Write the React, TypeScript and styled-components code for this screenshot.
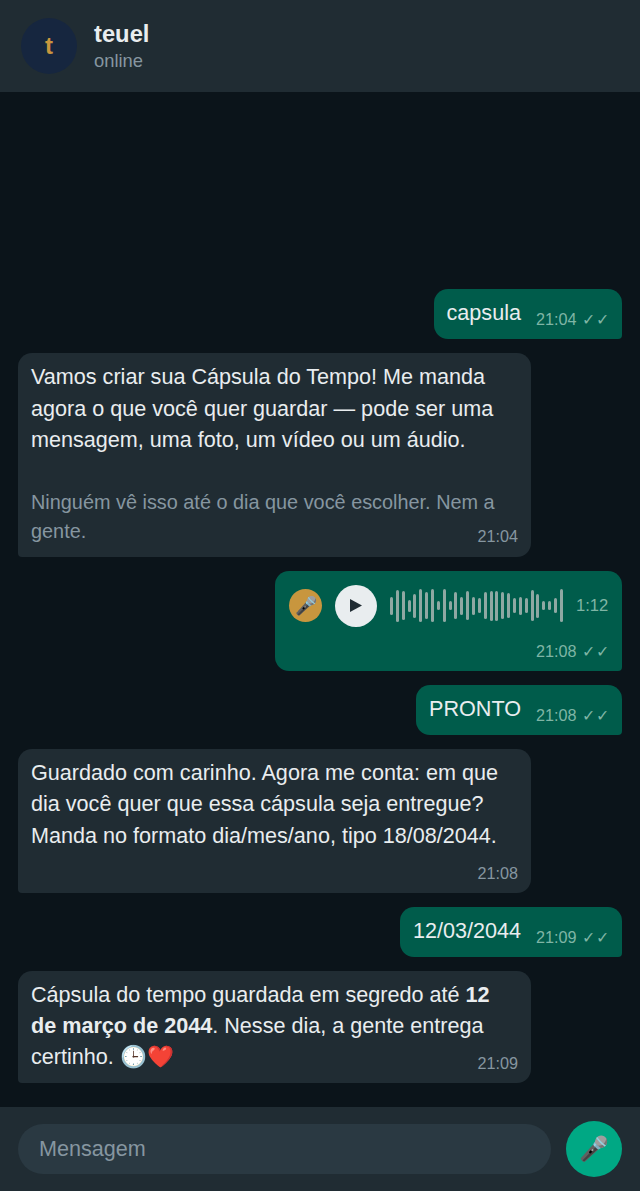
import React from 'react';
import styled, { createGlobalStyle } from 'styled-components';

const GlobalStyle = createGlobalStyle`
  * { box-sizing: border-box; }
  html, body { margin: 0; padding: 0; background: #0b141a; }
  body { font-family: "Liberation Sans", Arial, sans-serif; }
`;

const Page = styled.div`
  display: flex;
  flex-direction: column;
  width: 640px;
  height: 1191px;
  background: #0b141a;
  overflow: hidden;
`;

const Header = styled.header`
  display: flex;
  align-items: center;
  gap: 17px;
  height: 92px;
  padding: 0 21px;
  background: #202c33;
`;

const Avatar = styled.div`
  display: flex;
  align-items: center;
  justify-content: center;
  width: 56px;
  height: 56px;
  border-radius: 50%;
  background: #16263f;
  color: #c8963e;
  font-size: 24px;
  font-weight: 700;
`;

const Contact = styled.div`
  display: flex;
  flex-direction: column;
`;

const Name = styled.div`
  color: #e9edef;
  font-size: 23.76px;
  font-weight: 700;
  line-height: 30px;
`;

const Status = styled.div`
  color: #8696a0;
  font-size: 18.36px;
  line-height: 24px;
`;

const Messages = styled.main`
  flex: 1;
  display: flex;
  flex-direction: column;
  justify-content: flex-end;
  gap: 14px;
  padding: 0 18px 24px;
`;

const Bubble = styled.div<{ $sent?: boolean }>`
  display: flow-root;
  align-self: ${p => (p.$sent ? 'flex-end' : 'flex-start')};
  min-height: 50px;
  max-width: 513px;
  padding: 8px 13px 0;
  border-radius: ${p => (p.$sent ? '14px 14px 4px 14px' : '14px 14px 14px 4px')};
  background: ${p => (p.$sent ? '#005c4b' : '#202c33')};
  color: #e9edef;
  font-size: 21.6px;
  line-height: 1.45;
`;

const Muted = styled.div`
  margin-top: 33px;
  color: #8696a0;
  font-size: 19.87px;
`;

const Time = styled.span<{ $sent?: boolean }>`
  float: right;
  margin: 10px 0 7.7px 15px;
  color: ${p => (p.$sent ? '#7fb5a5' : '#8696a0')};
  font-size: 16.2px;
  line-height: 24px;
  white-space: nowrap;
`;

const MutedTime = styled(Time)`
  margin-top: 7px;
  margin-bottom: 8.7px;
`;

const Ticks = styled.span`
  margin: 0 -1px 0 1px;
  letter-spacing: 1px;
`;

const AudioBubble = styled(Bubble)`
  display: flex;
  flex-direction: column;
  align-items: flex-end;
  width: 347px;
  padding-top: 14px;
  padding-left: 14px;
`;

const AudioRow = styled.div`
  display: flex;
  align-items: center;
  gap: 13px;
  width: 100%;
  margin-bottom: 2.8px;
`;

const AudioMic = styled.div`
  display: flex;
  align-items: center;
  justify-content: center;
  width: 33px;
  height: 33px;
  border-radius: 50%;
  background: #c8963e;
  font-size: 18px;
  line-height: 1;
`;

const PlayButton = styled.div`
  display: flex;
  align-items: center;
  justify-content: center;
  width: 42px;
  height: 42px;
  border-radius: 50%;
  background: #e9edef;
`;

const Wave = styled.div`
  display: flex;
  align-items: center;
  justify-content: space-between;
  width: 173px;
  height: 34px;
`;

const WaveBar = styled.div`
  width: 3px;
  border-radius: 1.5px;
  background: #8fa8a3;
`;

const Duration = styled.span`
  color: #7fb5a5;
  font-size: 16.6px;
  line-height: 24px;
`;

const Composer = styled.footer`
  display: flex;
  align-items: center;
  gap: 15px;
  height: 84px;
  padding: 0 18px;
  background: #202c33;
`;

const InputBox = styled.input`
  flex: 1;
  min-width: 0;
  height: 50px;
  padding: 0 21px;
  border: 0;
  border-radius: 25px;
  outline: 0;
  background: #2a3942;
  color: #e9edef;
  font-family: inherit;
  font-size: 21.6px;
  &::placeholder { color: #8696a0; opacity: 1; }
`;

const MicButton = styled.div`
  display: flex;
  align-items: center;
  justify-content: center;
  flex-shrink: 0;
  width: 56px;
  height: 56px;
  border-radius: 50%;
  background: #00a884;
  font-size: 24px;
  line-height: 1;
`;

const bars = [
  18, 32, 29, 12, 24, 33, 27, 33, 9, 33, 9, 27, 18, 29, 18,
  15, 27, 30, 30, 27, 25, 15, 18, 15, 31, 24, 9, 9, 15, 33,
];

const SentTime = ({ at }: { at: string }) => (
  <Time $sent>
    {at} <Ticks>✓✓</Ticks>
  </Time>
);

export default function App() {
  return (
    <Page>
      <GlobalStyle />
      <Header>
        <Avatar>t</Avatar>
        <Contact>
          <Name>teuel</Name>
          <Status>online</Status>
        </Contact>
      </Header>
      <Messages>
        <Bubble $sent>
          capsula<SentTime at="21:04" />
        </Bubble>
        <Bubble>
          Vamos criar sua Cápsula do Tempo! Me manda agora o que você quer guardar — pode ser uma mensagem, uma foto, um vídeo ou um áudio.
          <Muted>
            Ninguém vê isso até o dia que você escolher. Nem a gente.
            <MutedTime>21:04</MutedTime>
          </Muted>
        </Bubble>
        <AudioBubble $sent>
          <AudioRow>
            <AudioMic>🎤</AudioMic>
            <PlayButton>
              <svg width="12" height="13" viewBox="0 0 12 13">
                <path d="M0 0 L12 6.5 L0 13 Z" fill="#202c33" />
              </svg>
            </PlayButton>
            <Wave>
              {bars.map((h, i) => (
                <WaveBar key={i} style={{ height: h }} />
              ))}
            </Wave>
            <Duration>1:12</Duration>
          </AudioRow>
          <SentTime at="21:08" />
        </AudioBubble>
        <Bubble $sent>
          PRONTO<SentTime at="21:08" />
        </Bubble>
        <Bubble>
          Guardado com carinho. Agora me conta: em que dia você quer que essa cápsula seja entregue? Manda no formato dia/mes/ano, tipo 18/08/2044.
          <Time>21:08</Time>
        </Bubble>
        <Bubble $sent>
          12/03/2044<SentTime at="21:09" />
        </Bubble>
        <Bubble>
          Cápsula do tempo guardada em segredo até <b>12 de março de 2044</b>. Nesse dia, a gente entrega certinho. 🕒❤️
          <Time>21:09</Time>
        </Bubble>
      </Messages>
      <Composer>
        <InputBox placeholder="Mensagem" />
        <MicButton>🎤</MicButton>
      </Composer>
    </Page>
  );
}
